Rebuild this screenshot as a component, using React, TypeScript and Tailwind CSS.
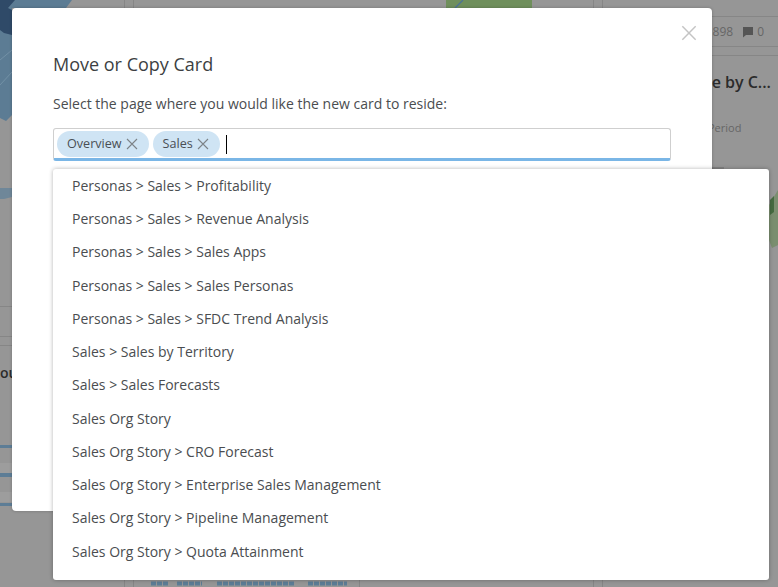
import React from "react";

const rows = [
  "Personas > Sales > Profitability",
  "Personas > Sales > Revenue Analysis",
  "Personas > Sales > Sales Apps",
  "Personas > Sales > Sales Personas",
  "Personas > Sales > SFDC Trend Analysis",
  "Sales > Sales by Territory",
  "Sales > Sales Forecasts",
  "Sales Org Story",
  "Sales Org Story > CRO Forecast",
  "Sales Org Story > Enterprise Sales Management",
  "Sales Org Story > Pipeline Management",
  "Sales Org Story > Quota Attainment",
];

function X({ className }: { className: string }) {
  return (
    <svg viewBox="0 0 12 12" className={className} fill="none" stroke="currentColor" strokeWidth="1.1">
      <path d="M1 1L11 11M11 1L1 11" />
    </svg>
  );
}

function Chip({ label }: { label: string }) {
  return (
    <span className="flex h-[26px] items-center gap-[4px] rounded-full bg-[#cfe4f4] pl-[10px] pr-[11px] text-[12.6px] text-[#4a4f55]">
      {label}
      <X className="h-[12px] w-[12px] text-[#7d8388]" />
    </span>
  );
}

function MapArt() {
  return (
    <svg className="absolute left-0 top-0 h-[587px] w-[778px]" viewBox="0 0 778 587">
      <path d="M0 0H72L66 8H12V115L6 121L0 118Z" fill="#5c7c94" />
      <path d="M0 0H15L8 8L12 10V35L4 33L0 30Z" fill="#2f4a68" />
      <path d="M0 60L12 50M0 85L12 72" stroke="#7391a6" fill="none" />
      <path d="M0 188H12V197L4 199H0Z" fill="#6f8799" />
      <path d="M0 463H12V473H0ZM0 492H12V502H0Z" fill="#9d9d9d" />
      <path d="M0 445H12V448H0ZM0 473H12V477H0ZM0 503H12V506H0Z" fill="#5d7d96" />
      <path d="M446 0H532V8H446Z" fill="#6f8f5c" />
      <path d="M455 8L463 0" stroke="#4c7199" strokeWidth="1.2" />
      <path d="M769 205L778 190V245L772 248L769 240Z" fill="#7a8e6f" />
      <path d="M770 200L774 196V212L770 215Z" fill="#466b41" />
      <path d="M712 168H724" stroke="#6f6f6f" />
      <path d="M151 583.500H168M177 583.500H202M217 583.500H294M308 583.500H347" stroke="#5d7d96" strokeWidth="4" strokeDasharray="5 1" />
      <path d="M359.500 580V587" stroke="#868686" />
    </svg>
  );
}

function Backdrop() {
  return (
    <div className="absolute inset-0 flex bg-[#969696]">
      <MapArt />
      <div className="relative w-[125px] border-r border-[#868686]">
        <div className="h-[307px] border-b border-[#868686]" />
        <div className="h-[30px] border-b border-[#868686]" />
        <div className="h-[9px] border-b border-[#868686]" />
        <div className="mt-[17px] whitespace-nowrap text-[14px] font-semibold leading-5 text-[#2b2b2b]">ou</div>
      </div>
      <div className="ml-[8px] h-full w-[461px] border-x border-[#868686]" />
      <div className="relative ml-[8px] flex-1 border-l border-[#868686]">
        <div className="h-[17px] border-b border-[#868686]" />
        <div className="flex h-[30px] items-center justify-end border-b border-[#868686] pr-[14px] text-[12px] text-[#666]">
          <span>898</span>
          <svg viewBox="0 0 12 12" className="ml-[9px] mr-[3px] h-[12px] w-[12px] text-[#555]" fill="currentColor">
            <path d="M1 1H11V9H4L1 11.500Z" />
          </svg>
          <span>0</span>
        </div>
        <div className="mt-[8px] h-px bg-[#868686]" />
        <div className="mt-[16px] whitespace-nowrap pr-[7px] text-right text-[16px] font-semibold leading-5 text-[#2b2b2b]">
          Revenue by C...
        </div>
        <div className="mt-[28px] pl-[105px] text-[11px] leading-4 text-[#666]">Period</div>
      </div>
    </div>
  );
}

export default function App() {
  return (
    <div
      className="relative h-[587px] w-[778px] overflow-hidden"
      style={{ fontFamily: '"Open Sans", sans-serif' }}
    >
      <Backdrop />
      <div className="absolute left-[12px] top-[8px] h-[503px] w-[700px] rounded-[4px] bg-white pl-[41px] pr-[41px] pt-[44px] shadow-[0_0_3px_rgba(0,0,0,0.25)]">
        <button className="absolute right-[15px] top-[17px] text-[#c4c4c4]">
          <X className="h-[16px] w-[16px]" />
        </button>
        <h2 className="text-[18px] font-normal leading-[24px] text-[#3c3f42]">Move or Copy Card</h2>
        <p className="mt-[18px] text-[14px] leading-5 text-[#4a4d50]">
          Select the page where you would like the new card to reside:
        </p>
        <div className="mt-[14px] flex h-[33px] w-[618px] items-center gap-[4px] rounded-[3px] border border-b-[3px] border-[#cfcfcf] border-b-[#7ab6e6] pb-[1px] pl-[3px] pt-[2px]">
          <Chip label="Overview" />
          <Chip label="Sales" />
          <span className="ml-[2px] h-[19px] w-px bg-black" />
        </div>
      </div>
      <ul className="absolute left-[53px] top-[169px] flex h-[411px] w-[716px] flex-col rounded-[3px] bg-white shadow-[0_0_4px_rgba(0,0,0,0.3)]">
        {rows.map((r) => (
          <li key={r} className="flex h-[33.25px] items-center pl-[19px] text-[14px] text-[#4a4d50] first:-mt-[0.25px]">
            {r}
          </li>
        ))}
      </ul>
    </div>
  );
}
